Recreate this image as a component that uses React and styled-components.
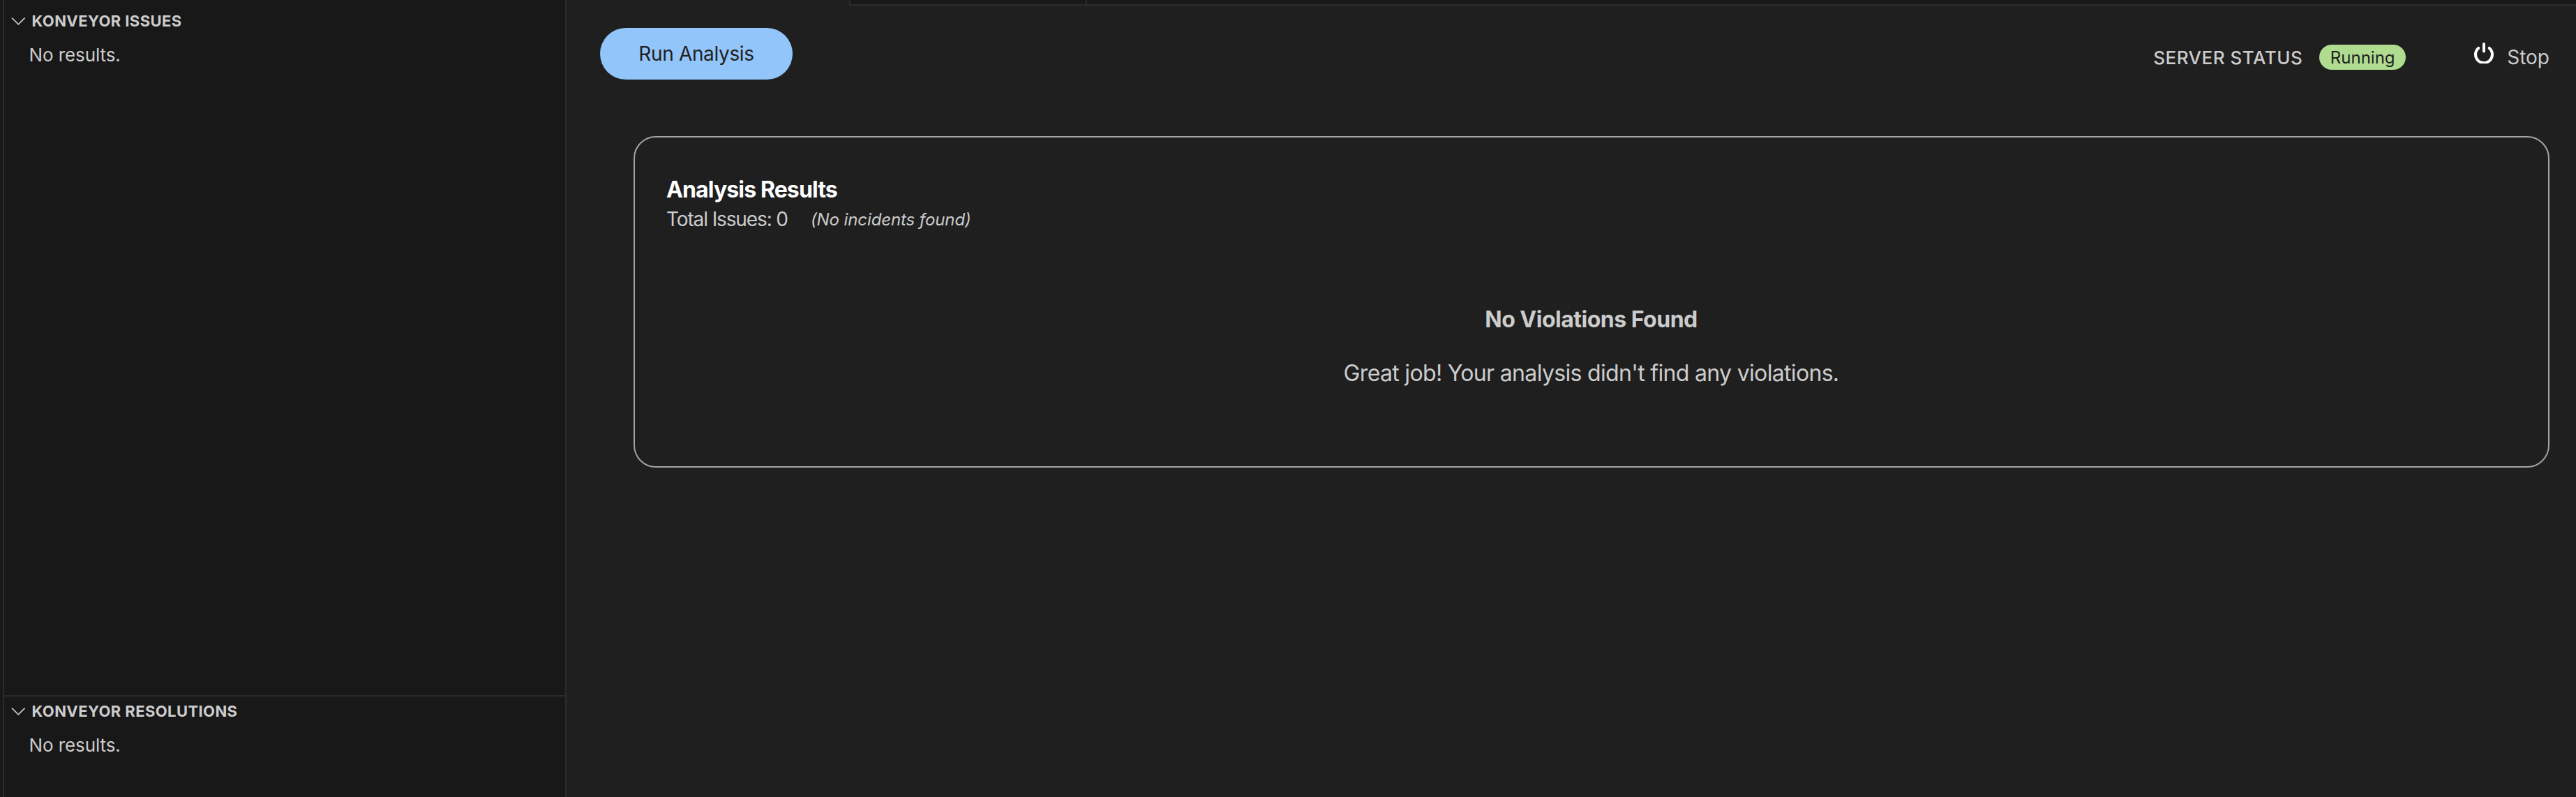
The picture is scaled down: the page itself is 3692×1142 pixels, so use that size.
import React from "react";
import styled, { createGlobalStyle } from "styled-components";

const Global = createGlobalStyle`
  * { box-sizing: border-box; }
  body { margin: 0; background: #1f1f1f; color: #cccccc; font-family: Inter, "Liberation Sans", sans-serif; }
  h1, h2, p { margin: 0; }
`;

const Window = styled.div`
  display: flex;
  height: 100vh;
  overflow: hidden;
`;

const Sidebar = styled.aside`
  display: flex;
  flex-direction: column;
  width: 812px;
  flex: none;
  background: #181818;
  border-right: 2px solid #2b2b2b;
  padding-left: 4px;
`;

const Panes = styled.div`
  flex: 1;
  display: flex;
  flex-direction: column;
  border-left: 2px solid #2b2b2b;
`;

const Pane = styled.section`
  height: ${(p) => p.$height || "auto"};
  flex: ${(p) => (p.$height ? "none" : "1")};
  padding-top: ${(p) => p.$top || "0"};
  border-top: ${(p) => (p.$height ? "2px solid #2b2b2b" : "none")};
`;

const PaneHeader = styled.div`
  display: flex;
  align-items: center;
  gap: 8px;
  height: 42px;
  padding-left: 9.5px;
  font-size: 22px;
  font-weight: 700;
  letter-spacing: 0.4px;
  white-space: nowrap;
`;

const PaneBody = styled.div`
  padding: 5px 0 0 35.5px;
  font-size: 26px;
  line-height: 45px;
  letter-spacing: -0.1px;
`;

const Editor = styled.main`
  flex: 1;
  min-width: 0;
  display: flex;
  flex-direction: column;
`;

const TabStrip = styled.div`
  display: flex;
  height: 8px;
  flex: none;
`;

const Tab = styled.div`
  width: ${(p) => p.$width || "auto"};
  flex: ${(p) => (p.$width ? "none" : "1")};
  background: ${(p) => (p.$active ? "#1f1f1f" : "#181818")};
  border-right: ${(p) => (p.$width ? "2px solid #2b2b2b" : "none")};
  border-bottom: ${(p) => (p.$active ? "none" : "2px solid #2b2b2b")};
`;

const Toolbar = styled.header`
  display: flex;
  justify-content: space-between;
  align-items: flex-start;
  padding: 32px 38px 0 48px;
`;

const RunButton = styled.button`
  width: 276px;
  height: 74px;
  border: none;
  border-radius: 37px;
  background: #92c5f9;
  color: #1f1f1f;
  font: 400 28px Inter, sans-serif;
  letter-spacing: -0.35px;
  padding: 0;
`;

const Status = styled.div`
  display: flex;
  align-items: center;
  height: 36px;
  margin-top: 24px;
`;

const StatusLabel = styled.span`
  font-size: 26px;
  font-weight: 500;
  line-height: 35px;
  letter-spacing: 0.5px;
  margin-right: 24px;
`;

const Badge = styled.span`
  width: 124px;
  height: 36px;
  border-radius: 18px;
  background: #afdc8f;
  color: #1f1f1f;
  font-size: 24px;
  line-height: 37px;
  text-align: center;
`;

const StopButton = styled.button`
  display: flex;
  align-items: center;
  gap: 19px;
  margin-left: 98px;
  padding: 0;
  border: none;
  background: none;
  color: #cccccc;
  font: 400 28px Inter, sans-serif;
`;

const PowerSvg = styled.svg`
  display: block;
  margin-bottom: 12px;
`;

const Card = styled.section`
  height: 475px;
  margin: 81px 38px 0 96px;
  border: 2px solid #a3a3a3;
  border-radius: 32px;
  padding: 53px 46px 0 45px;
`;

const Title = styled.h1`
  color: #ffffff;
  font-size: 32px;
  font-weight: 700;
  line-height: 44px;
  letter-spacing: -0.87px;
`;

const Summary = styled.div`
  display: flex;
  align-items: center;
  gap: 33px;
  height: 40px;
`;

const Total = styled.span`
  font-size: 28px;
  font-weight: 400;
  letter-spacing: -1.12px;
`;

const Incidents = styled.em`
  font-size: 24px;
  letter-spacing: -0.1px;
`;

const Empty = styled.div`
  display: flex;
  flex-direction: column;
  align-items: center;
  padding-top: 102px;
`;

const EmptyTitle = styled.h2`
  font-size: 32px;
  font-weight: 700;
  line-height: 44px;
  letter-spacing: -0.5px;
`;

const EmptyText = styled.p`
  margin-top: 33px;
  font-size: 32px;
  line-height: 44px;
  letter-spacing: -0.67px;
`;

const Chevron = () => (
  <svg width="22" height="14" viewBox="0 0 22 14" fill="none" stroke="#cccccc" strokeWidth="1.7">
    <path d="M1 2.6 L10.3 11.9 L19.6 2.6" />
  </svg>
);

const Power = () => (
  <PowerSvg width="28" height="30" viewBox="0 0 28 30" fill="none" stroke="#ffffff" strokeWidth="4" strokeLinecap="round">
    <path d="M6.2 7.9 A12 12 0 1 0 21.8 7.9" />
    <path d="M14 2 V12.4" />
  </PowerSvg>
);

function ResultPane({ title, ...rest }) {
  return (
    <Pane {...rest}>
      <PaneHeader>
        <Chevron />
        {title}
      </PaneHeader>
      <PaneBody>No results.</PaneBody>
    </Pane>
  );
}

export default function App() {
  return (
    <Window>
      <Global />
      <Sidebar>
        <Panes>
          <ResultPane title="KONVEYOR ISSUES" $top="9px" />
          <ResultPane title="KONVEYOR RESOLUTIONS" $height="146px" />
        </Panes>
      </Sidebar>
      <Editor>
        <TabStrip>
          <Tab $active $width="407px" />
          <Tab $width="339px" />
          <Tab />
        </TabStrip>
        <Toolbar>
          <RunButton>Run Analysis</RunButton>
          <Status>
            <StatusLabel>SERVER STATUS</StatusLabel>
            <Badge>Running</Badge>
            <StopButton>
              <Power />
              Stop
            </StopButton>
          </Status>
        </Toolbar>
        <Card>
          <Title>Analysis Results</Title>
          <Summary>
            <Total>Total Issues: 0</Total>
            <Incidents>(No incidents found)</Incidents>
          </Summary>
          <Empty>
            <EmptyTitle>No Violations Found</EmptyTitle>
            <EmptyText>Great job! Your analysis didn't find any violations.</EmptyText>
          </Empty>
        </Card>
      </Editor>
    </Window>
  );
}
